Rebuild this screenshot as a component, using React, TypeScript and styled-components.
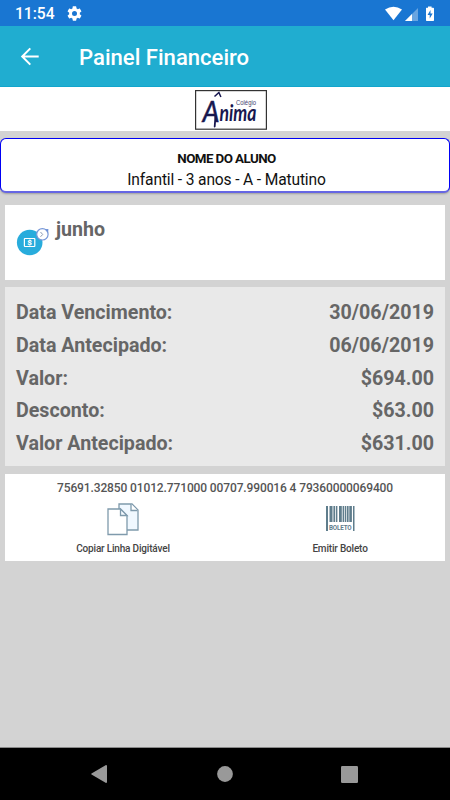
import React from "react";
import styled, { createGlobalStyle } from "styled-components";

const GlobalStyle = createGlobalStyle`
  * { box-sizing: border-box; }
  body { margin: 0; font-family: Roboto, "Liberation Sans", sans-serif; background: #d3d3d3; }
  svg { display: block; flex: none; overflow: visible; }
`;

const Screen = styled.div`
  width: 450px;
  height: 800px;
  display: flex;
  flex-direction: column;
  background: #d3d3d3;
  overflow: hidden;
`;

const StatusBar = styled.div`
  height: 26px;
  flex: none;
  display: flex;
  align-items: center;
  padding: 1px 15px 0;
  background: #1976d2;
  color: #fff;
`;

const Clock = styled.span`
  width: 52px;
  font-size: 15.6px;
  font-weight: 500;
  line-height: 24px;
`;

const StatusIcons = styled.div`
  display: flex;
  margin-left: auto;
`;

const AppBar = styled.header`
  height: 61px;
  flex: none;
  display: flex;
  align-items: center;
  gap: 39px;
  padding: 0 20px;
  background: #20add0;
  color: #fff;
  border-bottom: 1px solid #12a5cc;
`;

const Title = styled.h1`
  margin: 1px 0 0;
  font-size: 22.1px;
  font-weight: 500;
  line-height: 28px;
  white-space: nowrap;
`;

const LogoStrip = styled.div`
  height: 44px;
  flex: none;
  display: flex;
  justify-content: center;
  padding: 3px 0 0 11px;
  background: #fff;
`;

const Student = styled.section`
  height: 55px;
  flex: none;
  margin: 7px 0 0;
  padding: 10px 0 0 3px;
  border: 1px solid #0000f5;
  border-bottom: 2px solid #6666e4;
  border-radius: 6px;
  background: #fff;
  color: #111;
  text-align: center;
  box-shadow: 0 1px 2px rgba(0, 0, 0, 0.25);
`;

const StudentName = styled.div`
  font-size: 13.4px;
  font-weight: 700;
  line-height: 20px;
  letter-spacing: -0.6px;
`;

const StudentClass = styled.div`
  font-size: 15.6px;
  line-height: 22px;
  letter-spacing: -0.15px;
`;

const Cards = styled.main`
  flex: 1;
  display: flex;
  flex-direction: column;
  gap: 8px;
  padding: 12px 5px 0;
`;

const Card = styled.section<{ $height: number; $tone?: string }>`
  height: ${(p) => p.$height}px;
  flex: none;
  background: ${(p) => p.$tone ?? "#fff"};
  color: #666;
`;

const MonthCard = styled(Card)`
  display: flex;
  gap: 6px;
  margin-bottom: -1px;
  padding: 12px 11px;
`;

const MonthIcon = styled.div`
  padding-top: 9px;
`;

const Month = styled.h2`
  margin: 0;
  font-size: 19.6px;
  font-weight: 700;
  line-height: 26px;
`;

const DetailsCard = styled(Card)`
  padding: 9px 11px 0;
`;

const DetailRow = styled.div`
  height: 32.85px;
  display: flex;
  justify-content: space-between;
  align-items: center;
  font-size: 19.65px;
  font-weight: 700;
`;

const PaymentCard = styled(Card)`
  color: #555;
  padding-top: 4px;
`;

const DigitLine = styled.div`
  font-size: 12px;
  font-weight: 500;
  line-height: 20px;
  letter-spacing: -0.12px;
  text-align: center;
`;

const Actions = styled.div`
  display: grid;
  grid-template-columns: 236px 198px;
`;

const Action = styled.button`
  display: flex;
  flex-direction: column;
  align-items: center;
  padding: 0;
  border: 0;
  background: none;
  color: #444;
  font: 500 10px/14px Roboto, sans-serif;
  letter-spacing: -0.18px;
`;

const ActionArt = styled.span<{ $top: number }>`
  height: 44px;
  display: flex;
  align-items: flex-start;
  padding-top: ${(p) => p.$top}px;
`;

const NavBar = styled.nav`
  height: 53px;
  flex: none;
  display: grid;
  grid-template-columns: 163px 124px 163px;
  align-items: center;
  background: #000;
  border-top: 1px solid #888;
`;

const NavSlot = styled.span<{ $align: string; $pad?: string }>`
  display: flex;
  justify-content: ${(p) => p.$align};
  padding: ${(p) => p.$pad ?? "0"};
`;

const GearIcon = () => (
  <svg width="15" height="15" viewBox="1.5 1.5 21 21" fill="#fff">
    <path d="M19.43 12.98c.04-.32.07-.64.07-.98s-.03-.66-.07-.98l2.11-1.65c.19-.15.24-.42.12-.64l-2-3.46c-.12-.22-.39-.3-.61-.22l-2.49 1c-.52-.4-1.08-.73-1.69-.98l-.38-2.65A.49.49 0 0 0 14 2h-4c-.25 0-.46.18-.49.42l-.38 2.65c-.61.25-1.17.59-1.69.98l-2.49-1c-.23-.09-.49 0-.61.22l-2 3.46c-.13.22-.07.49.12.64l2.11 1.65c-.04.32-.07.65-.07.98s.03.66.07.98l-2.11 1.65c-.19.15-.24.42-.12.64l2 3.46c.12.22.39.3.61.22l2.49-1c.52.4 1.08.73 1.69.98l.38 2.65c.03.24.24.42.49.42h4c.25 0 .46-.18.49-.42l.38-2.65c.61-.25 1.17-.59 1.69-.98l2.49 1c.23.09.49 0 .61-.22l2-3.46c.12-.22.07-.49-.12-.64l-2.11-1.65zM12 15.5a3.5 3.5 0 1 1 0-7 3.5 3.5 0 0 1 0 7z" />
  </svg>
);

const SignalIcons = () => (
  <svg width="50" height="16" viewBox="385 5 50 16" fill="#fff">
    <path d="M385 8.600Q393.500 2.700 402 8.600L393.500 19.300Z" />
    <path d="M418 7v13h-13z" opacity=".35" />
    <path d="M412 13v7h-7z" />
    <path d="M426.400 6.700h1.600V5.500h3.600v1.200h1.600q.8 0 .8.700v11.900q0 .7-.7.700h-6.600q-.7 0-.7-.700V7.400q0-.7.400-.7z" />
    <path d="M430.500 9l-3 4.900h2.200v3.600l3-4.900h-2.200z" fill="#1976d2" />
  </svg>
);

const BackIcon = () => (
  <svg width="20" height="20" viewBox="0 0 20 20" fill="none" stroke="#fff" strokeWidth="2">
    <path d="M18.700 10.500H2.500M10.300 2.400L2.200 10.500l8.100 8.100" />
  </svg>
);

const SchoolLogo = () => (
  <svg width="72" height="40" viewBox="0 0 72 40" fill="#17174f">
    <rect x=".6" y=".6" width="70.800" height="38.600" fill="#fff" stroke="#333" strokeWidth="1.200" />
    <path d="M19.500 6.500l4.400-4 2 4.500" fill="none" stroke="#17174f" strokeWidth="1.500" />
    <path d="M20.500 26l-.8 10.500" fill="none" stroke="#17174f" strokeWidth="1.800" strokeLinecap="round" />
    <text x="7.500" y="32" fontFamily="Lato" fontStyle="italic" fontWeight="400" fontSize="29" stroke="#17174f" strokeWidth=".5" textLength="17" lengthAdjust="spacingAndGlyphs">A</text>
    <text x="24.500" y="30.500" fontFamily="Lato" fontStyle="italic" fontWeight="700" fontSize="22" textLength="37" lengthAdjust="spacingAndGlyphs">nima</text>
    <text x="41" y="14.600" fontFamily="Liberation Sans" fontSize="6.500" fill="#44446f" textLength="20" lengthAdjust="spacingAndGlyphs">Colégio</text>
  </svg>
);

const InvoiceIcon = () => (
  <svg width="34" height="30" viewBox="16 226 34 30">
    <circle cx="29.700" cy="242.500" r="12.800" fill="#28acdc" />
    <rect x="24.400" y="238.500" width="10.400" height="8" rx=".5" fill="none" stroke="#fff" strokeWidth="1.200" />
    <text x="29.600" y="245.400" textAnchor="middle" fontFamily="Roboto" fontWeight="900" fontSize="8" fill="#fff">$</text>
    <circle cx="42.400" cy="234.300" r="5.700" fill="#fff" stroke="#7898d8" strokeWidth="1.200" />
    <path d="M40.500 232l2.200 2.500-2.200 2.300" fill="none" stroke="#8c9bb4" />
    <path d="M45 229.300l3.400-.2-.3 3.500z" fill="#6b8fd6" />
  </svg>
);

const CopyIcon = () => (
  <svg width="32" height="33" viewBox="0 0 32 33" stroke="#7f9aac" strokeWidth="1.300">
    <path d="M12 1h13l6 6v20H12z" fill="#f0f8ff" />
    <path d="M24 1v6.500h6.500" fill="#fff" />
    <path d="M1 6h12.500l6.500 6.500V31.500H1z" fill="#fff" />
    <path d="M13.500 6v6.500H20z" fill="#f5faff" />
  </svg>
);

const bars = [
  [0, 2, 25], [3.5, 3, 16], [7.4, 1.8, 16], [10, 1.4, 16], [13, 2.8, 16],
  [16.6, 1.5, 16], [18.8, 1.2, 16], [20.7, 1.9, 16], [23.3, 2.6, 16], [27, 1.5, 25],
];

const BarcodeIcon = () => (
  <svg width="29" height="26" viewBox="0 0 29 26" fill="#5f7d8c">
    {bars.map(([x, w, h]) => (
      <rect key={x} x={x} y="0" width={w} height={h} />
    ))}
    <text x="3" y="23.700" fontFamily="Roboto" fontWeight="700" fontSize="7" textLength="22.500" lengthAdjust="spacingAndGlyphs">BOLETO</text>
  </svg>
);

const details = [
  ["Data Vencimento:", "30/06/2019"],
  ["Data Antecipado:", "06/06/2019"],
  ["Valor:", "$694.00"],
  ["Desconto:", "$63.00"],
  ["Valor Antecipado:", "$631.00"],
];

export default function App() {
  return (
    <>
      <GlobalStyle />
      <Screen>
        <StatusBar>
          <Clock>11:54</Clock>
          <GearIcon />
          <StatusIcons><SignalIcons /></StatusIcons>
        </StatusBar>
        <AppBar>
          <BackIcon />
          <Title>Painel Financeiro</Title>
        </AppBar>
        <LogoStrip><SchoolLogo /></LogoStrip>
        <Student>
          <StudentName>NOME DO ALUNO</StudentName>
          <StudentClass>Infantil - 3 anos - A - Matutino</StudentClass>
        </Student>
        <Cards>
          <MonthCard $height={75}>
            <MonthIcon><InvoiceIcon /></MonthIcon>
            <Month>junho</Month>
          </MonthCard>
          <DetailsCard $height={179} $tone="#e9e9e9">
            {details.map(([label, value]) => (
              <DetailRow key={label}>
                <span>{label}</span>
                <span>{value}</span>
              </DetailRow>
            ))}
          </DetailsCard>
          <PaymentCard $height={87}>
            <DigitLine>75691.32850 01012.771000 00707.990016 4 79360000069400</DigitLine>
            <Actions>
              <Action>
                <ActionArt $top={5}><CopyIcon /></ActionArt>
                Copiar Linha Digitável
              </Action>
              <Action>
                <ActionArt $top={8}><BarcodeIcon /></ActionArt>
                Emitir Boleto
              </Action>
            </Actions>
          </PaymentCard>
        </Cards>
        <NavBar>
          <NavSlot $align="flex-start" $pad="0 0 0 91px">
            <svg width="16" height="18" viewBox="0 0 16 18" fill="#999"><path d="M15 0q1 0 1 1v16q0 1-1 1L.5 9.500q-.6-.5 0-1z" /></svg>
          </NavSlot>
          <NavSlot $align="center">
            <svg width="16" height="16" viewBox="0 0 16 16" fill="#999"><circle cx="8" cy="8" r="7.900" /></svg>
          </NavSlot>
          <NavSlot $align="flex-end" $pad="0 92px 0 0">
            <svg width="17" height="17" viewBox="0 0 17 17" fill="#999"><rect width="17" height="17" rx="1.200" /></svg>
          </NavSlot>
        </NavBar>
      </Screen>
    </>
  );
}
